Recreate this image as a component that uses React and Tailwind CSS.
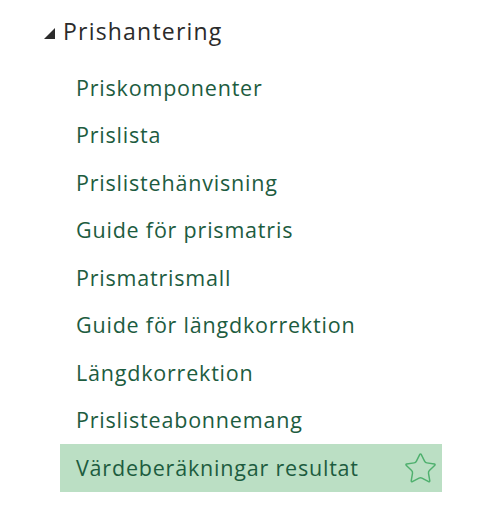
import { Star } from "lucide-react";

const items = [
  "Priskomponenter",
  "Prislista",
  "Prislistehänvisning",
  "Guide för prismatris",
  "Prismatrismall",
  "Guide för längdkorrektion",
  "Längdkorrektion",
  "Prislisteabonnemang",
];

export default function App() {
  return (
    <div className="min-h-[510px] w-[482px] bg-white font-['Open_Sans',sans-serif]">
      <div className="pl-[44px] pt-[15px]">
        {/* Group header */}
        <div className="flex h-[32px] items-center gap-[8px] text-[23px] tracking-[1.2px] text-[#2b2b2b]">
          <svg width="11" height="11" viewBox="0 0 11 11" className="mt-[4px]">
            <polygon points="11,0 11,11 0,11" fill="#2b2b2b" />
          </svg>
          <span>Prishantering</span>
        </div>
      </div>

      {/* Links */}
      <ul className="mt-[17px] pl-[60px] w-[442px]">
        {items.map((label) => (
          <li key={label} className="flex h-[47.5px] items-center pl-[16px] text-[21.5px] tracking-[0.8px] text-[#1d5c3f]">
            {label}
          </li>
        ))}
        <li className="flex h-[48px] items-center justify-between bg-[#bbdfc4] pl-[16px] pr-[4px] text-[21.5px] tracking-[0.8px] text-[#1d5c3f]">
          <span>Värdeberäkningar resultat</span>
          <Star size={35} strokeWidth={1} className="text-[#4fb06e]" />
        </li>
      </ul>
    </div>
  );
}
